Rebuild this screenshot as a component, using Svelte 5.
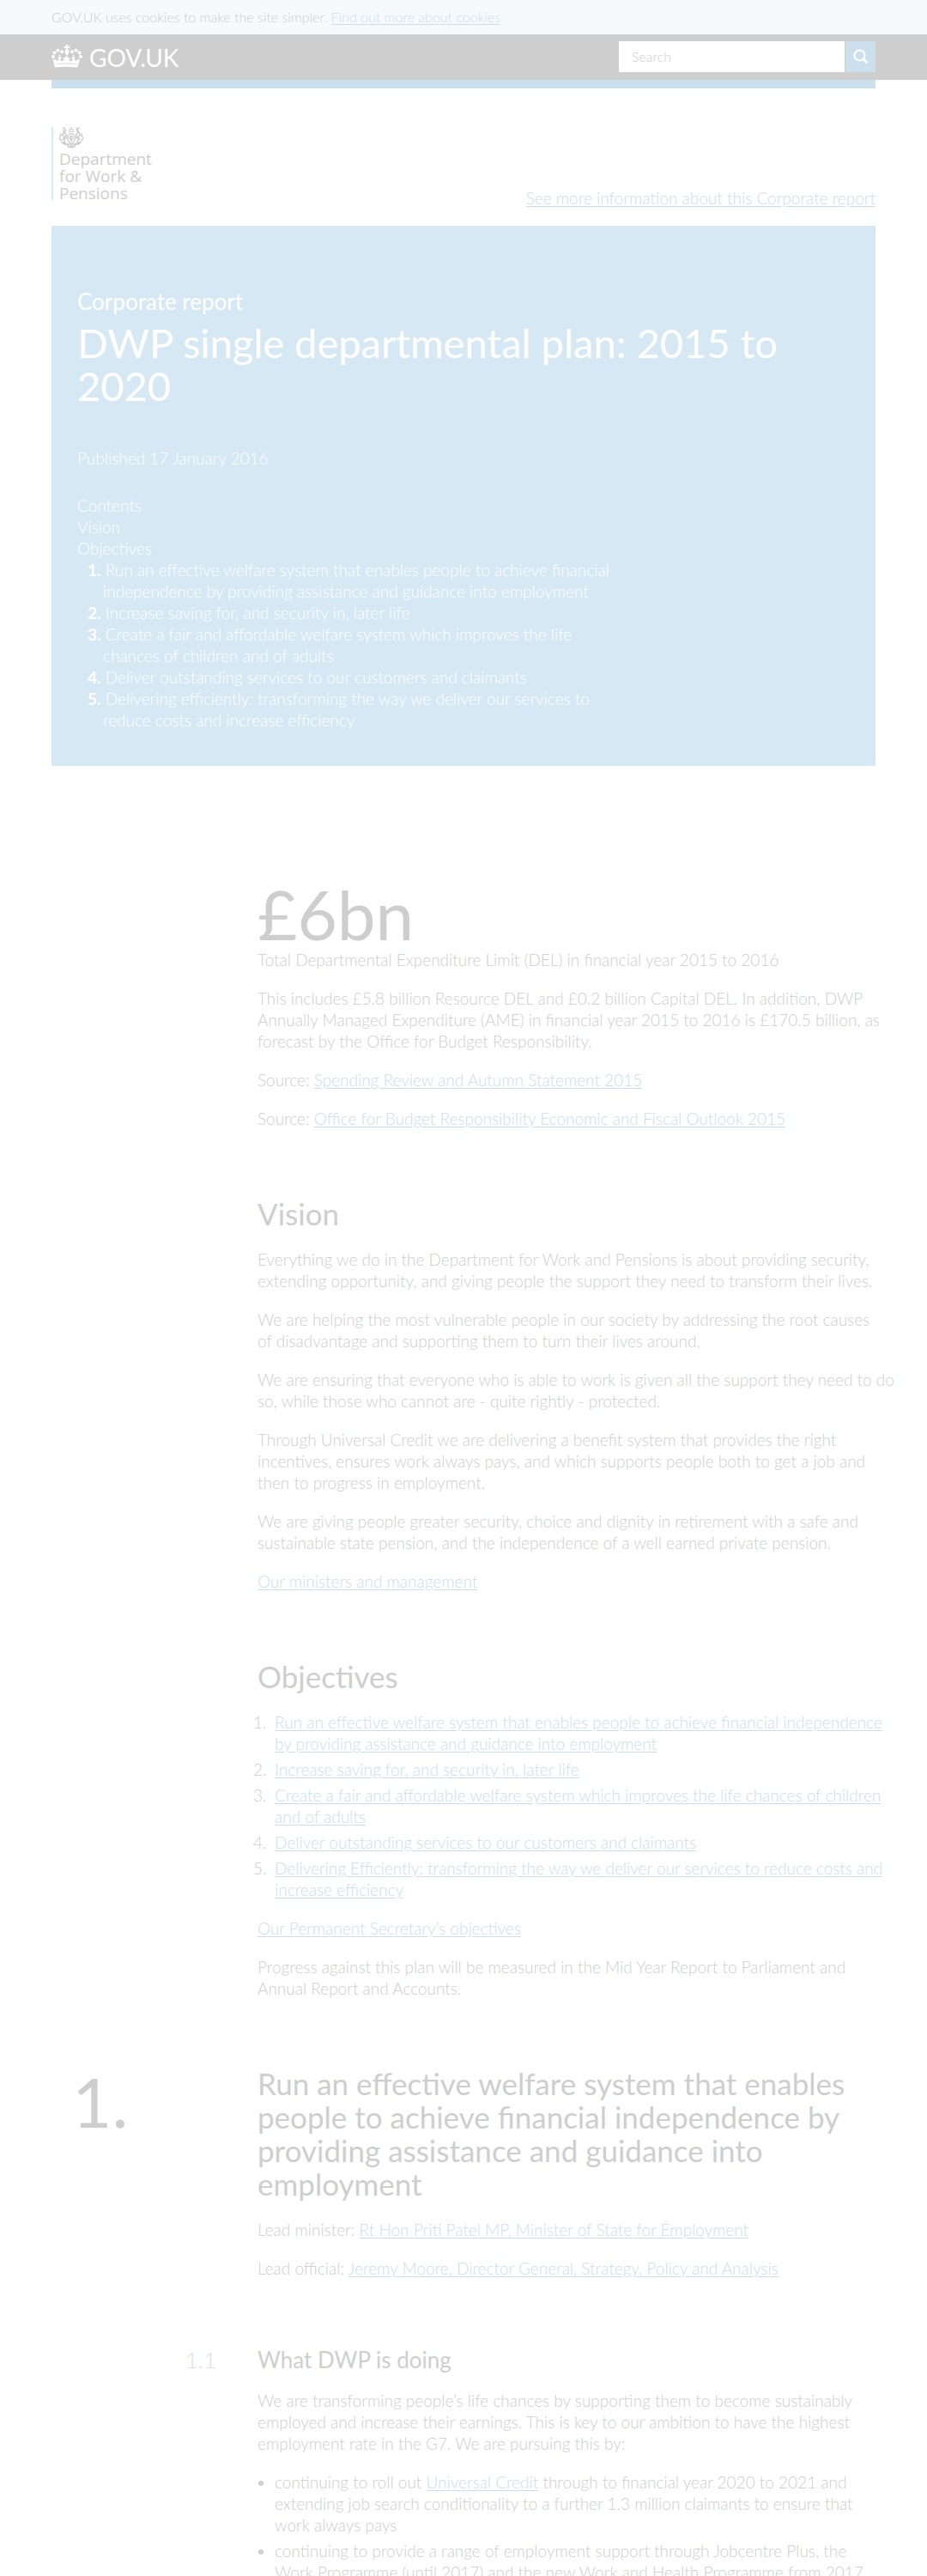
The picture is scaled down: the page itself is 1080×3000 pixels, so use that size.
<script>
  const objectives = [
    'Run an effective welfare system that enables people to achieve financial independence by providing assistance and guidance into employment',
    'Increase saving for, and security in, later life',
    'Create a fair and affordable welfare system which improves the life chances of children and of adults',
    'Deliver outstanding services to our customers and claimants',
    'Delivering efficiently: transforming the way we deliver our services to reduce costs and increase efficiency'
  ];
  const linked = [
    ['Run an effective welfare system that enables people to achieve financial independence', 'by providing assistance and guidance into employment'],
    ['Increase saving for, and security in, later life'],
    ['Create a fair and affordable welfare system which improves the life chances of children', 'and of adults'],
    ['Deliver outstanding services to our customers and claimants'],
    ['Delivering Efficiently: transforming the way we deliver our services to reduce costs and', 'increase efficiency']
  ];
  const vision = [
    ['Everything we do in the Department for Work and Pensions is about providing security,', 'extending opportunity, and giving people the support they need to transform their lives.'],
    ['We are helping the most vulnerable people in our society by addressing the root causes', 'of disadvantage and supporting them to turn their lives around.'],
    ['We are ensuring that everyone who is able to work is given all the support they need to do', 'so, while those who cannot are - quite rightly - protected.'],
    ['Through Universal Credit we are delivering a benefit system that provides the right', 'incentives, ensures work always pays, and which supports people both to get a job and', 'then to progress in employment.'],
    ['We are giving people greater security, choice and dignity in retirement with a safe and', 'sustainable state pension, and the independence of a well earned private pension.']
  ];
  let query = $state('');
</script>

{#snippet lines(parts)}
  {#each parts as part, i}{#if i}<br />{/if}{part}{/each}
{/snippet}

<div class="cookies">
  <div class="wrap">GOV.UK uses cookies to make the site simpler. <a href="#cookies">Find out more about cookies</a></div>
</div>

<header class="top">
  <div class="wrap top-row">
    <a class="brand" href="#home">
      <svg width="36" height="27" viewBox="0 0 36 27" fill="#fff" aria-hidden="true">
        <circle cx="2" cy="14" r="2" /><circle cx="3.4" cy="9.4" r="2" /><circle cx="7.3" cy="6.8" r="2" /><circle cx="12" cy="8.2" r="2" />
        <circle cx="34" cy="14" r="2" /><circle cx="32.6" cy="9.4" r="2" /><circle cx="28.7" cy="6.8" r="2" /><circle cx="24" cy="8.2" r="2" />
        <path d="M16.800 0h2.400l-.4 2.200 2.400-.6v2.800l-2.400-.6.2 2c1.200.6 1.700 1.500 1.500 2.600l-1.500 3.800h-2l-1.500-3.800c-.2-1.100.3-2 1.500-2.600l.2-2-2.400.6v-2.800l2.400.6z" />
        <path d="M1.500 16l2.400 2.200.6-2 .9 2.200 1.700.4 1.600-2-1.700-1.600 2-1-.2-2.200h1.600l-.2 2.300 1.700 1.300-1.800 1.300 1.100 2 2.500.1 1.100-1.300-1.400-1 1-1.700 1.700.7-.3-1.900h3.400l-.3 1.900 1.700-.7 1 1.700-1.400 1 1.100 1.300 2.500-.1 1.100-2-1.800-1.300 1.700-1.300-.2-2.300h1.600l-.2 2.200 2 1-1.700 1.600 1.600 2 1.700-.4.9-2.200.6 2 2.400-2.200-3.300 10.600q-13.200-1.600-26.400 0z" />
        <path d="M6.500 22.500q11.500-1.400 23 0" fill="none" stroke="#cecece" stroke-width=".8" />
      </svg>
      <span>GOV.UK</span>
    </a>
    <form class="search" role="search">
      <input type="search" aria-label="Search" placeholder="Search" bind:value={query} />
      <button type="button" aria-label="Search">
        <svg width="18" height="18" viewBox="0 0 18 18" fill="none" stroke="#fff" aria-hidden="true">
          <circle cx="7.500" cy="7.500" r="6" stroke-width="2.200" /><path d="M11.500 11.500l4.800 4.800" stroke-width="3" />
        </svg>
      </button>
    </form>
  </div>
</header>

<div class="wrap">
  <div class="bar"></div>
  <div class="org-row">
    <a class="org" href="#dwp">
      <svg width="28" height="25" viewBox="0 0 28 25" fill="none" stroke="#cecece" aria-hidden="true">
        <path d="M11.500 5.500q-1-3 .5-3 1.200 0 2 1 .8-1 2-1 1.500 0 .5 3zM14 0v3M12.800 1h2.400" />
        <ellipse cx="14" cy="13" rx="4.400" ry="5.500" stroke-width="1.400" /><ellipse cx="14" cy="13" rx="2" ry="3" fill="#dedede" />
        <path d="M4 1.500q3-.8 3.500 2l-1.500 2.500 2.500 3.500-2.500 4 .5 5M4.500 3l1.500 3-2.500 3 3 2.500-3 3.500M1 7.500q2 2 0 4t1.500 4M7 12l2.500 1" stroke-width="1.500" />
        <path d="M24 1.500q-3-.8-3.500 2l1.500 2.500-2.500 3.500 2.500 4-.5 5M20 1l3 5 1.500 3-3 2.500 3 3.500M27 7.500q-2 2 0 4t-1.500 4M21 12l-2.500 1" stroke-width="1.500" />
        <path d="M2.500 16.500q2 4 7 3.500l1 3q3.500 1.500 7 0l1-3q5 .5 7-3.500M5 17.500q3 2.500 6 2.500h6q3 0 6-2.500M12 22h4" stroke-width="1.700" />
      </svg>
      <span>Department<br />for Work &amp;<br />Pensions</span>
    </a>
    <a href="#info">See more information about this Corporate report</a>
  </div>

  <section class="banner">
    <p class="kind">Corporate report</p>
    <h1>DWP single departmental plan: 2015 to 2020</h1>
    <p class="date">Published 17 January 2016</p>
    <nav aria-label="Contents">
      <p>Contents</p>
      <a href="#vision">Vision</a>
      <a href="#objectives">Objectives</a>
      <ol>
        {#each objectives as o, i}
          <li><a href="#o{i + 1}"><b>{i + 1}.</b> {o}</a></li>
        {/each}
      </ol>
    </nav>
  </section>

  <main>
    <section class="body first">
      <p class="big">£6bn</p>
      <p class="lead">Total Departmental Expenditure Limit (DEL) in financial year 2015 to 2016</p>
      <p class="set">This includes £5.8 billion Resource DEL and £0.2 billion Capital DEL. In addition, DWP<br />Annually Managed Expenditure (AME) in financial year 2015 to 2016 is £170.5 billion, as<br />forecast by the Office for Budget Responsibility.</p>
      <p>Source: <a href="#spending">Spending Review and Autumn Statement 2015</a></p>
      <p>Source: <a href="#outlook">Office for Budget Responsibility Economic and Fiscal Outlook 2015</a></p>
    </section>

    <section class="body" id="vision">
      <h2>Vision</h2>
      {#each vision as p}<p class="set">{@render lines(p)}</p>{/each}
      <p><a href="#ministers">Our ministers and management</a></p>
    </section>

    <section class="body" id="objectives">
      <h2>Objectives</h2>
      <ol class="list set">
        {#each linked as o, i}
          <li><a href="#o{i + 1}">{@render lines(o)}</a></li>
        {/each}
      </ol>
      <p><a href="#secretary">Our Permanent Secretary’s objectives</a></p>
      <p>Progress against this plan will be measured in the Mid Year Report to Parliament and Annual Report and Accounts.</p>
    </section>

    <section class="numbered" id="o1">
      <span class="big num">1.</span>
      <div>
        <h2>Run an effective welfare system that enables people to achieve financial independence by providing assistance and guidance into employment</h2>
        <p>Lead minister: <a href="#minister">Rt Hon Priti Patel MP, Minister of State for Employment</a></p>
        <p>Lead official: <a href="#official">Jeremy Moore, Director General, Strategy, Policy and Analysis</a></p>
      </div>
    </section>

    <section class="numbered">
      <span class="sub">1.1</span>
      <div>
        <h3>What DWP is doing</h3>
        <p>We are transforming people’s life chances by supporting them to become sustainably employed and increase their earnings. This is key to our ambition to have the highest employment rate in the G7. We are pursuing this by:</p>
        <ul class="list">
          <li>continuing to roll out <a href="#uc">Universal Credit</a> through to financial year 2020 to 2021 and extending job search conditionality to a further 1.3 million claimants to ensure that work always pays</li>
          <li>continuing to provide a range of employment support through Jobcentre Plus, the Work Programme (until 2017) and the new Work and Health Programme from 2017</li>
        </ul>
      </div>
    </section>
  </main>
</div>

<style>
  :global(body) { background: #fff; }
  :global(#app) {
    color: #cecece;
    font: 300 19px/25px Lato, "Liberation Sans", sans-serif;
  }
  * { box-sizing: border-box; }
  p, h1, h2, h3, ol, ul { margin: 0; padding: 0; }
  a { color: #c8deed; text-underline-offset: 2px; }
  .wrap { padding: 0 60px; }
  .cookies { background: #f6fafd; font-size: 16px; line-height: 20px; padding: 10px 0; }
  .top { background: #cecece; }
  .top-row { display: flex; justify-content: space-between; align-items: center; height: 53px; }
  .brand { display: flex; align-items: center; gap: 8px; color: #fff; text-decoration: none; font-size: 28px; font-weight: 400; line-height: 28px; }
  .brand svg { margin-bottom: 3px; }
  .search { display: flex; gap: 1px; margin-bottom: 2px; }
  .search input { width: 263px; height: 36px; border: 0; border-radius: 0; padding: 0 15px; background: #fff; font: inherit; font-size: 16px; color: #cecece; appearance: none; outline: 0; }
  .search input::placeholder { color: #cecece; opacity: 1; }
  .search button { width: 35px; height: 36px; border: 0; padding: 0; background: #ccdfed; display: grid; place-items: center; }
  .bar { height: 10px; background: #ccdfed; }
  .org-row { display: flex; justify-content: space-between; align-items: flex-end; padding: 45px 0 20px; }
  .org { border-left: 2px solid #ccf1ef; padding-left: 7px; margin-bottom: 10px; color: #cecece; text-decoration: none; font: 500 19px/20px "Open Sans", sans-serif; }
  .org svg { display: block; }
  .org span { display: block; margin: 2px 0 -2px; }
  .banner { background: #d6e8f4; color: #fff; padding: 73px 30px 41px; }
  .banner a { color: #fff; text-decoration: none; display: block; }
  .kind { font-size: 26px; line-height: 30px; font-weight: 400; }
  h1 { font-size: 47px; line-height: 50px; font-weight: 400; margin-top: 8px; }
  .date { margin: 47px 0 30px; }
  .banner ol { list-style: none; max-width: 640px; padding-left: 30px; }
  .banner li { text-indent: -18px; }
  b { font-weight: 700; }
  .body { padding-left: 240px; margin-top: 79px; }
  .first { margin-top: 137px; }
  .body p + p, .numbered p + p { margin-top: 20px; }
  .set { white-space: nowrap; }
  .big { font-size: 80px; line-height: 70px; font-weight: 400; }
  .body .lead { margin-top: 6px; }
  h2 { font-size: 35px; line-height: 39px; font-weight: 400; margin-bottom: 21px; }
  h3 { font-size: 26px; line-height: 30px; font-weight: 400; margin-bottom: 20px; }
  .list { padding-left: 20px; margin-bottom: 20px; }
  ol.list li::marker { content: counter(list-item) ".\2002"; }
  p + .list { margin-top: 20px; }
  .list li + li { margin-top: 5px; }
  .numbered { display: grid; grid-template-columns: 240px 1fr; margin-top: 79px; }
  .num { padding: 5px 0 0 24px; }
  .sub { padding-right: 48px; text-align: right; font-size: 26px; line-height: 30px; color: #dedede; }
</style>
